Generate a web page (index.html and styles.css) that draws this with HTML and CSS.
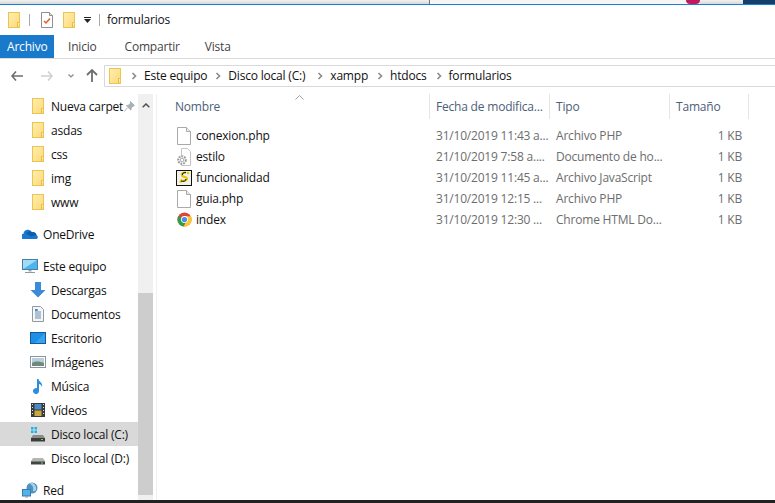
FILE: index.html
```html
<!DOCTYPE html>
<html lang="es">
<head>
<meta charset="utf-8">
<title>formularios</title>
<link rel="stylesheet" href="styles.css">
</head>
<body>
<svg class="defs" width="0" height="0" aria-hidden="true">
  <defs>
    <linearGradient id="fg" x1="0" y1="0" x2="1" y2="1"><stop offset="0" stop-color="#ffeeb0"/><stop offset="1" stop-color="#fdd978"/></linearGradient>
    <symbol id="folder" viewBox="0 0 12 16">
      <rect x=".5" y=".5" width="11" height="15" fill="url(#fg)" stroke="#eac54f"/>
      <path d="M9.5 15.5v-5h2" fill="#fff3c4" stroke="#e6bd3e"/>
    </symbol>
    <symbol id="page" viewBox="0 0 14 18">
      <path d="M.5.5h9l4 4v13H.5z" fill="#fff" stroke="#a9a9a9"/>
      <path d="M9.5.5v4h4" fill="#eee" stroke="#a9a9a9"/>
    </symbol>
    <symbol id="chev" viewBox="0 0 6 8"><path d="M1.5 1l3 3-3 3" fill="none" stroke="#8a8a8a" stroke-width="1.6"/></symbol>
    <symbol id="chrome" viewBox="0 0 16 16">
      <circle cx="8" cy="8" r="7.5" fill="#e0453a"/>
      <path d="M8 8L1.5 4.2A7.5 7.5 0 0 0 7 15.4L11 8z" fill="#2f9e48"/>
      <path d="M8 4.5h6.7A7.5 7.5 0 0 1 7 15.4L11 8z" fill="#fbc82e"/>
      <circle cx="8" cy="8" r="3.7" fill="#fff"/><circle cx="8" cy="8" r="2.8" fill="#4a8cf0"/>
    </symbol>
  </defs>
</svg>

<div class="topstrip">
  <span class="peek peek-a"></span><span class="peek peek-doc"><span class="peek-text">Document</span></span><span class="peek peek-pink"></span><span class="peek peek-b"></span><span class="peek peek-blue"></span>
</div>

<header class="qat">
  <svg class="ic-folder"><use href="#folder"/></svg>
  <span class="qat-sep sep-a"></span>
  <svg class="qat-doc" viewBox="0 0 12 16" width="12" height="16">
    <path d="M.5.5h8l3 3v12H.5z" fill="#fff" stroke="#8f8f8f"/>
    <path d="M8.5.5v3h3" fill="#ddd" stroke="#8f8f8f"/>
    <path d="M3 9l2 2 4-4.500" fill="none" stroke="#e8592b" stroke-width="1.500"/>
  </svg>
  <svg class="ic-folder qat-f2"><use href="#folder"/></svg>
  <svg class="qat-drop" viewBox="0 0 7 6" width="7" height="6"><path d="M0 .5h7" stroke="#222"/><path d="M0 2h7L3.500 6z" fill="#222"/></svg>
  <span class="qat-sep sep-b"></span>
  <span class="qat-title">formularios</span>
</header>

<nav class="tabs">
  <span class="tab tab-file">Archivo</span>
  <span class="tab tab-home">Inicio</span>
  <span class="tab tab-share">Compartir</span>
  <span class="tab tab-view">Vista</span>
</nav>

<div class="navbar">
  <div class="nav-btns">
    <svg class="nb-back" width="12" height="10" viewBox="0 0 12 10"><path d="M5 .5L1 5l4 4.500M1 5h11" fill="none" stroke="#6e6e6e" stroke-width="1.600"/></svg>
    <svg class="nb-fwd" width="12" height="10" viewBox="0 0 12 10"><path d="M7 .5L11 5l-4 4.500M11 5H0" fill="none" stroke="#d0d0d0" stroke-width="1.600"/></svg>
    <svg class="nb-down" width="6" height="4" viewBox="0 0 6 4"><path d="M.5.5L3 3 5.500.5" fill="none" stroke="#8a8a8a" stroke-width="1.200"/></svg>
    <svg class="nb-up" width="12" height="13" viewBox="0 0 12 13"><path d="M1 6l5-5 5 5M6 1v12" fill="none" stroke="#6e6e6e" stroke-width="1.800"/></svg>
  </div>
  <div class="address">
    <svg class="ic-folder addr-f"><use href="#folder"/></svg>
    <svg class="crumb-chev"><use href="#chev"/></svg><span class="crumb c-este">Este equipo</span>
    <svg class="crumb-chev"><use href="#chev"/></svg><span class="crumb c-disco">Disco local (C:)</span>
    <svg class="crumb-chev"><use href="#chev"/></svg><span class="crumb">xampp</span>
    <svg class="crumb-chev"><use href="#chev"/></svg><span class="crumb">htdocs</span>
    <svg class="crumb-chev"><use href="#chev"/></svg><span class="crumb">formularios</span>
  </div>
</div>

<main class="content">
  <aside class="sidebar">
    <ul class="tree">
      <li class="row lvl2"><svg class="ic-folder"><use href="#folder"/></svg><span class="clip">Nueva carpet</span>
        <svg class="pin" width="11" height="11" viewBox="0 0 12 12"><path d="M7 .5l4.500 4.500-1.500.5-2 2-.5 2.500-5-5 2.500-.5 2-2zM3.500 7.500L.5 11.500" fill="#a8b0b8" stroke="#a8b0b8"/></svg></li>
      <li class="row lvl2"><svg class="ic-folder"><use href="#folder"/></svg><span>asdas</span></li>
      <li class="row lvl2"><svg class="ic-folder"><use href="#folder"/></svg><span>css</span></li>
      <li class="row lvl2"><svg class="ic-folder"><use href="#folder"/></svg><span>img</span></li>
      <li class="row lvl2"><svg class="ic-folder"><use href="#folder"/></svg><span>www</span></li>
      <li class="row lvl1 group"><svg class="ic16" viewBox="0 0 16 16"><path d="M1.500 13a2.600 2.600 0 0 1 0-5.200 4.500 4.500 0 0 1 8.500-1.600 3.500 3.500 0 0 1 4.500 3 2 2 0 0 1 0 3.800z" fill="#1a78d0"/><path d="M4 7.500a4 4 0 0 1 6-1.300 3.500 3.500 0 0 1 4.500 3L9 10.500z" fill="#0f5eab"/></svg><span>OneDrive</span></li>
      <li class="row lvl1 group"><svg class="ic16" viewBox="0 0 16 16"><rect x=".5" y="1.500" width="15" height="10" fill="#4fb4ee" stroke="#4a7fa8"/><path d="M1 2h14L2 10.500H1z" fill="#9fdcf8"/><path d="M6.500 12h3v1.500h-3z" fill="#9aa7b2"/><path d="M3 14h10v1H3z" fill="#8c99a5"/></svg><span>Este equipo</span></li>
      <li class="row lvl2"><svg class="ic16" viewBox="0 0 16 16"><path d="M5 0h6v8h4.500L8 15.500.5 8H5z" fill="#3c8ada"/></svg><span>Descargas</span></li>
      <li class="row lvl2"><svg class="ic16" viewBox="0 0 16 16"><path d="M2.500.5h8l3 3v12h-11z" fill="#f4f6f8" stroke="#8f9aa3"/><path d="M5 4h3M5 6h6M5 8h6M5 10h6M5 12h6" stroke="#6a8bad"/><path d="M5 3h2.500v2H5z" fill="#3c8ada"/></svg><span>Documentos</span></li>
      <li class="row lvl2"><svg class="ic16" viewBox="0 0 16 16"><rect x=".5" y="2.500" width="15" height="11" fill="#1e8ee6" stroke="#12589a"/><path d="M15 3v10H5z" fill="#35a3ee"/></svg><span>Escritorio</span></li>
      <li class="row lvl2"><svg class="ic16" viewBox="0 0 16 16"><rect x=".5" y="2.500" width="15" height="11" fill="#fff" stroke="#8a949c"/><rect x="2" y="4" width="12" height="8" fill="#b9cfdc"/><path d="M2 9c3-2 7-2 12 0v3H2z" fill="#6f8a7c"/></svg><span>Imágenes</span></li>
      <li class="row lvl2"><svg class="ic16" viewBox="0 0 16 16"><path d="M7 1h1.500c.5 3 4.500 3.500 3.500 8-.5-2-2-3-3-3v7a3 3 0 1 1-2-2.800z" fill="#2a8fe0"/></svg><span>Música</span></li>
      <li class="row lvl2"><svg class="ic16" viewBox="0 0 16 16"><rect x="1" y="1" width="14" height="14" fill="#3a3a3a"/><path d="M2 2h1v1H2zM2 5h1v1H2zM2 8h1v1H2zM2 11h1v1H2zM13 2h1v1h-1zM13 5h1v1h-1zM13 8h1v1h-1zM13 11h1v1h-1z" fill="#ddd"/><rect x="4.500" y="2" width="7" height="5.500" fill="#4b88c8"/><rect x="4.500" y="8.500" width="7" height="5.500" fill="#c9a93d"/></svg><span>Vídeos</span></li>
      <li class="row lvl2 selected"><svg class="ic16" viewBox="0 0 16 16"><path d="M1 1h2.500v2.500H1zM4.500 1H7v2.500H4.500zM1 4.500h2.500V7H1zM4.500 4.500H7V7H4.500z" fill="#19b4ee"/><path d="M3 9h10l2 3v3H1v-3z" fill="#8b8b8b"/><path d="M1 12h14v3.500H1z" fill="#3c3c3c"/><path d="M11 13h2v1h-2z" fill="#5fe05f"/></svg><span>Disco local (C:)</span></li>
      <li class="row lvl2"><svg class="ic16" viewBox="0 0 16 16"><path d="M3 8h10l2 3v1H1v-1z" fill="#b5b5b5"/><path d="M1 11.500h14v3H1z" fill="#444"/><path d="M11 12.500h2v1h-2z" fill="#5fe05f"/></svg><span>Disco local (D:)</span></li>
      <li class="row lvl1 group"><svg class="ic16" viewBox="0 0 16 16"><circle cx="10" cy="6" r="5.500" fill="#4e92c4"/><path d="M7 1.500c3 1 5 3 4 8l3-1c1-3-1-7-4-7.500z" fill="#a9d2ea"/><rect x=".5" y="7.500" width="8" height="6.500" fill="#4fb4ee" stroke="#3d7aa8"/><path d="M3 14.500h3v1H3z" fill="#8c99a5"/></svg><span>Red</span></li>
    </ul>
  </aside>
  <div class="scrollbar">
    <svg class="sb-up" width="8" height="5" viewBox="0 0 8 5"><path d="M.7 4.300L4 1l3.300 3.300" fill="none" stroke="#505050" stroke-width="1.500"/></svg>
    <div class="sb-thumb"></div>
  </div>
  <section class="files">
    <svg class="sort" width="9" height="5" viewBox="0 0 9 5"><path d="M.5 4.500l4-4 4 4" fill="none" stroke="#9aa0a6"/></svg>
    <div class="head">
      <span class="hcell h-name">Nombre</span>
      <span class="hcell">Fecha de modifica...</span>
      <span class="hcell">Tipo</span>
      <span class="hcell">Tamaño</span>
    </div>
    <div class="file"><span class="c-name"><svg class="ic-file ic-page" width="14" height="18"><use href="#page"/></svg><span>conexion.php</span></span><span class="c-meta">31/10/2019 11:43 a...</span><span class="c-meta">Archivo PHP</span><span class="c-size">1 KB</span></div>
    <div class="file"><span class="c-name"><svg class="ic-file" viewBox="0 0 16 18" width="16" height="18"><path d="M5.500.5h6l3 3v14h-9z" fill="#fff" stroke="#c4c4c4"/><circle cx="6" cy="12" r="3.800" fill="#fff" stroke="#9a9a9a" stroke-width="2" stroke-dasharray="1.800 1"/><circle cx="6" cy="12" r="1.800" fill="#fff" stroke="#aaa"/></svg><span>estilo</span></span><span class="c-meta">21/10/2019 7:58 a....</span><span class="c-meta">Documento de ho...</span><span class="c-size">1 KB</span></div>
    <div class="file"><span class="c-name"><svg class="ic-file" viewBox="0 0 16 16" width="16" height="16"><rect x=".5" y=".5" width="15" height="15" fill="#f2f2ea" stroke="#111"/><path d="M10 2.500c-3 0-5 1-4 3s5 1 5 3-3 3-6 2M4 12.500l2-3M11 3.500l2-1" fill="none" stroke="#e8c400" stroke-width="2.200"/><path d="M10 2.500c-3 0-4 1-3.500 2.500M10 9c0 2-3 3-5 2" fill="none" stroke="#111"/></svg><span>funcionalidad</span></span><span class="c-meta">31/10/2019 11:45 a...</span><span class="c-meta">Archivo JavaScript</span><span class="c-size">1 KB</span></div>
    <div class="file"><span class="c-name"><svg class="ic-file ic-page" width="14" height="18"><use href="#page"/></svg><span>guia.php</span></span><span class="c-meta">31/10/2019 12:15 ...</span><span class="c-meta">Archivo PHP</span><span class="c-size">1 KB</span></div>
    <div class="file"><span class="c-name"><svg class="ic-file ic-chrome" width="15" height="15" viewBox="0 0 16 16"><use href="#chrome"/></svg><span>index</span></span><span class="c-meta">31/10/2019 12:30 ...</span><span class="c-meta">Chrome HTML Do...</span><span class="c-size">1 KB</span></div>
  </section>
</main>
<footer class="edge"></footer>
</body>
</html>
```
FILE: styles.css
```css
* { box-sizing: border-box; }
html, body { margin: 0; padding: 0; }
body {
  width: 775px; height: 503px; overflow: hidden;
  display: flex; flex-direction: column;
  background: #fff; color: #111;
  font: 12px/16px "Open Sans", "Noto Sans", sans-serif;
  letter-spacing: -.2px;
}
.defs { position: absolute; }
svg { display: block; flex: none; }
ul { list-style: none; margin: 0; padding: 0; }

.topstrip { height: 5px; flex: none; display: flex; border-bottom: 1px solid #1a80d2; overflow: hidden; }
.peek { display: block; height: 4px; background: linear-gradient(#f2f2f2, #d8d8d8); }
.peek-a { width: 429px; }
.peek-doc { width: 257px; background: #f6f6f6; border-left: 1px solid #777; position: relative; }
.peek-text { position: absolute; left: 18px; top: -13px; font-size: 13px; color: #333; }
.peek-pink { width: 14px; background: #c0195f; border-radius: 0 0 10px 10px; }
.peek-b { width: 43px; }
.peek-blue { width: 32px; background: #123f6e; }

.qat { height: 30px; flex: none; display: flex; align-items: center; padding-left: 8px; }
.ic-folder { width: 12px; height: 16px; }
.ic16 { width: 16px; height: 16px; }
.qat-sep { width: 1px; height: 12px; background: #a8a8a8; }
.sep-a { margin-left: 9px; }
.qat-doc { margin-left: 11px; }
.qat-f2 { margin-left: 10px; }
.qat-drop { margin-left: 9px; }
.sep-b { margin-left: 8px; }
.qat-title { margin-left: 7px; }

.tabs { height: 24px; flex: none; display: flex; border-bottom: 1px solid #dadada; color: #444; }
.tab { height: 23px; line-height: 23px; }
.tab-file { width: 54px; padding-left: 7px; background: #1979ca; color: #fff; }
.tab-home { margin-left: 14px; }
.tab-share { margin-left: 28px; }
.tab-view { margin-left: 25px; }

.navbar { height: 35px; flex: none; display: flex; padding-top: 6px; }
.nav-btns { width: 104px; display: flex; align-items: center; height: 21px; padding-left: 11px; }
.nb-fwd { margin-left: 18px; }
.nb-down { margin-left: 15px; }
.nb-up { margin-left: 12px; }
.address { flex: 1; height: 22px; display: flex; align-items: center; border: 1px solid #d9d9d9; border-right: 0; padding-left: 4px; }
.addr-f { margin-right: 10px; }
.crumb-chev { width: 6px; height: 8px; margin-right: 7px; }
.crumb { margin-right: 9px; line-height: 18px; height: 19px; }
.c-este { margin-right: 8px; }
.c-disco { margin-right: 12px; }

.content { flex: 1; min-height: 0; display: flex; }
.sidebar { width: 138px; flex: none; overflow: hidden; }
.row { height: 24px; display: flex; align-items: center; white-space: nowrap; }
.row span { padding-top: 1px; }
.lvl1 { padding-left: 22px; }
.lvl2 { padding-left: 30px; }
.group { margin-top: 8px; }
.row.lvl1 span { margin-left: 5px; }
.row.lvl2 span { margin-left: 5px; }
.lvl2 .ic-folder { margin-left: 2px; }
.lvl2 .ic-folder + span { margin-left: 7px; }
.selected { background: #d9d9d9; }
.pin { margin-left: 1px; }

.scrollbar { width: 15px; flex: none; background: #f0f0f0; position: relative; padding-top: 199px; }
.sb-up { position: absolute; left: 4px; top: 9px; }
.sb-thumb { height: 202px; background: #cdcdcd; }

.files { flex: 1; position: relative; border-left: 1px solid #f0f0f0; margin-left: 3px; }
.sort { position: absolute; left: 138px; top: 1px; }
.head, .file { display: grid; grid-template-columns: 272px 120px 120px 80px; }
.head { height: 25px; margin-bottom: 6px; color: #4c607a; }
.hcell { line-height: 25px; padding-left: 6px; border-left: 1px solid #e5e5e5; }
.hcell:last-child { border-right: 1px solid #e5e5e5; }
.h-name { padding-left: 18px; border-left: 0; }
.file { height: 21px; align-items: center; white-space: nowrap; }
.c-name { display: grid; grid-template-columns: 20px auto; align-items: center; padding-left: 19px; height: 21px; }
.ic-page { margin-left: 1px; }
.ic-chrome { margin-left: 1px; }
.c-meta { padding-left: 7px; color: #6d6d6d; overflow: hidden; }
.c-size { text-align: right; padding-right: 7px; color: #6d6d6d; }

.edge { height: 3px; flex: none; background: #222; }
```
